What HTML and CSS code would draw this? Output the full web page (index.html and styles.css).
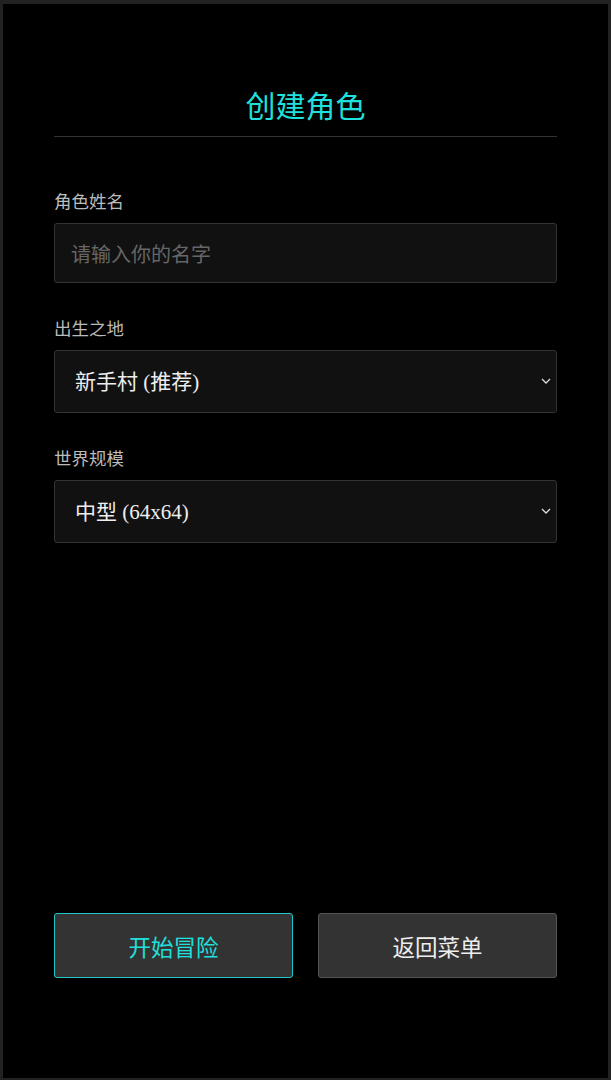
FILE: index.html
```html
<!DOCTYPE html>
<html lang="zh-CN">
<head>
<meta charset="utf-8">
<title>创建角色</title>
<link rel="stylesheet" href="styles.css">
</head>
<body>
<div class="screen">
  <h1 class="title">创建角色</h1>
  <div class="form">
    <div class="field">
      <label class="label" for="name">角色姓名</label>
      <input class="input" id="name" type="text" placeholder="请输入你的名字">
    </div>
    <div class="field">
      <label class="label" for="birth">出生之地</label>
      <div class="select-wrap">
        <select class="select" id="birth">
          <option>新手村 (推荐)</option>
        </select>
        <svg class="chevron" width="10" height="6" viewBox="0 0 10 6"><path d="M1 1 L5 5 L9 1" fill="none" stroke="#ddd" stroke-width="1.3"/></svg>
      </div>
    </div>
    <div class="field">
      <label class="label" for="size">世界规模</label>
      <div class="select-wrap">
        <select class="select" id="size">
          <option>中型 (64x64)</option>
        </select>
        <svg class="chevron" width="10" height="6" viewBox="0 0 10 6"><path d="M1 1 L5 5 L9 1" fill="none" stroke="#ddd" stroke-width="1.3"/></svg>
      </div>
    </div>
  </div>
  <div class="actions">
    <button class="btn btn-primary">开始冒险</button>
    <button class="btn">返回菜单</button>
  </div>
</div>
</body>
</html>
```

FILE: styles.css
```css
html, body {
  margin: 0;
  padding: 0;
  background: #000;
}
.screen {
  box-sizing: border-box;
  height: 1080px;
  border-style: solid;
  border-color: #222;
  border-width: 4px 3px 2px 3px;
  background: #000;
  padding: 80px 51px 100px 51px;
  display: flex;
  flex-direction: column;
  font-family: "Noto Sans CJK SC", "Noto Sans", sans-serif;
}
.title {
  margin: 0;
  font-size: 30px;
  line-height: 40px;
  font-weight: 400;
  color: #1fe0dc;
  text-align: center;
  padding-bottom: 12px;
  border-bottom: 1px solid #333;
}
.form {
  display: flex;
  flex-direction: column;
  gap: 33px;
  margin-top: 52px;
}
.field {
  display: flex;
  flex-direction: column;
  gap: 10px;
}
.label {
  font-size: 17.5px;
  line-height: 24px;
  color: #bbb;
}
.input {
  box-sizing: border-box;
  height: 60px;
  width: 100%;
  background: #111;
  border: 1px solid #333;
  border-radius: 3px;
  padding: 0 16px;
  font-family: "Noto Sans CJK SC", sans-serif;
  font-size: 20px;
  color: #eee;
  outline: none;
}
.input::placeholder {
  color: #666;
}
.select-wrap {
  position: relative;
}
.select {
  box-sizing: border-box;
  width: 100%;
  height: 63px;
  background: #111;
  border: 1px solid #333;
  border-radius: 3px;
  padding: 0 20px;
  font-family: "Liberation Serif", "Noto Sans CJK SC", serif;
  font-size: 21px;
  font-weight: 400;
  color: #eee;
  appearance: none;
  -webkit-appearance: none;
  outline: none;
}
.chevron {
  position: absolute;
  right: 6px;
  top: 28px;
}
.actions {
  margin-top: auto;
  display: flex;
  gap: 25px;
}
.btn {
  flex: 1;
  height: 65px;
  background: #333;
  border: 1px solid #555;
  border-radius: 3px;
  color: #eee;
  font-family: "Noto Sans CJK SC", sans-serif;
  font-size: 22.5px;
}
.btn-primary {
  border-color: #1fc8c8;
  color: #1fe0dc;
}
```
